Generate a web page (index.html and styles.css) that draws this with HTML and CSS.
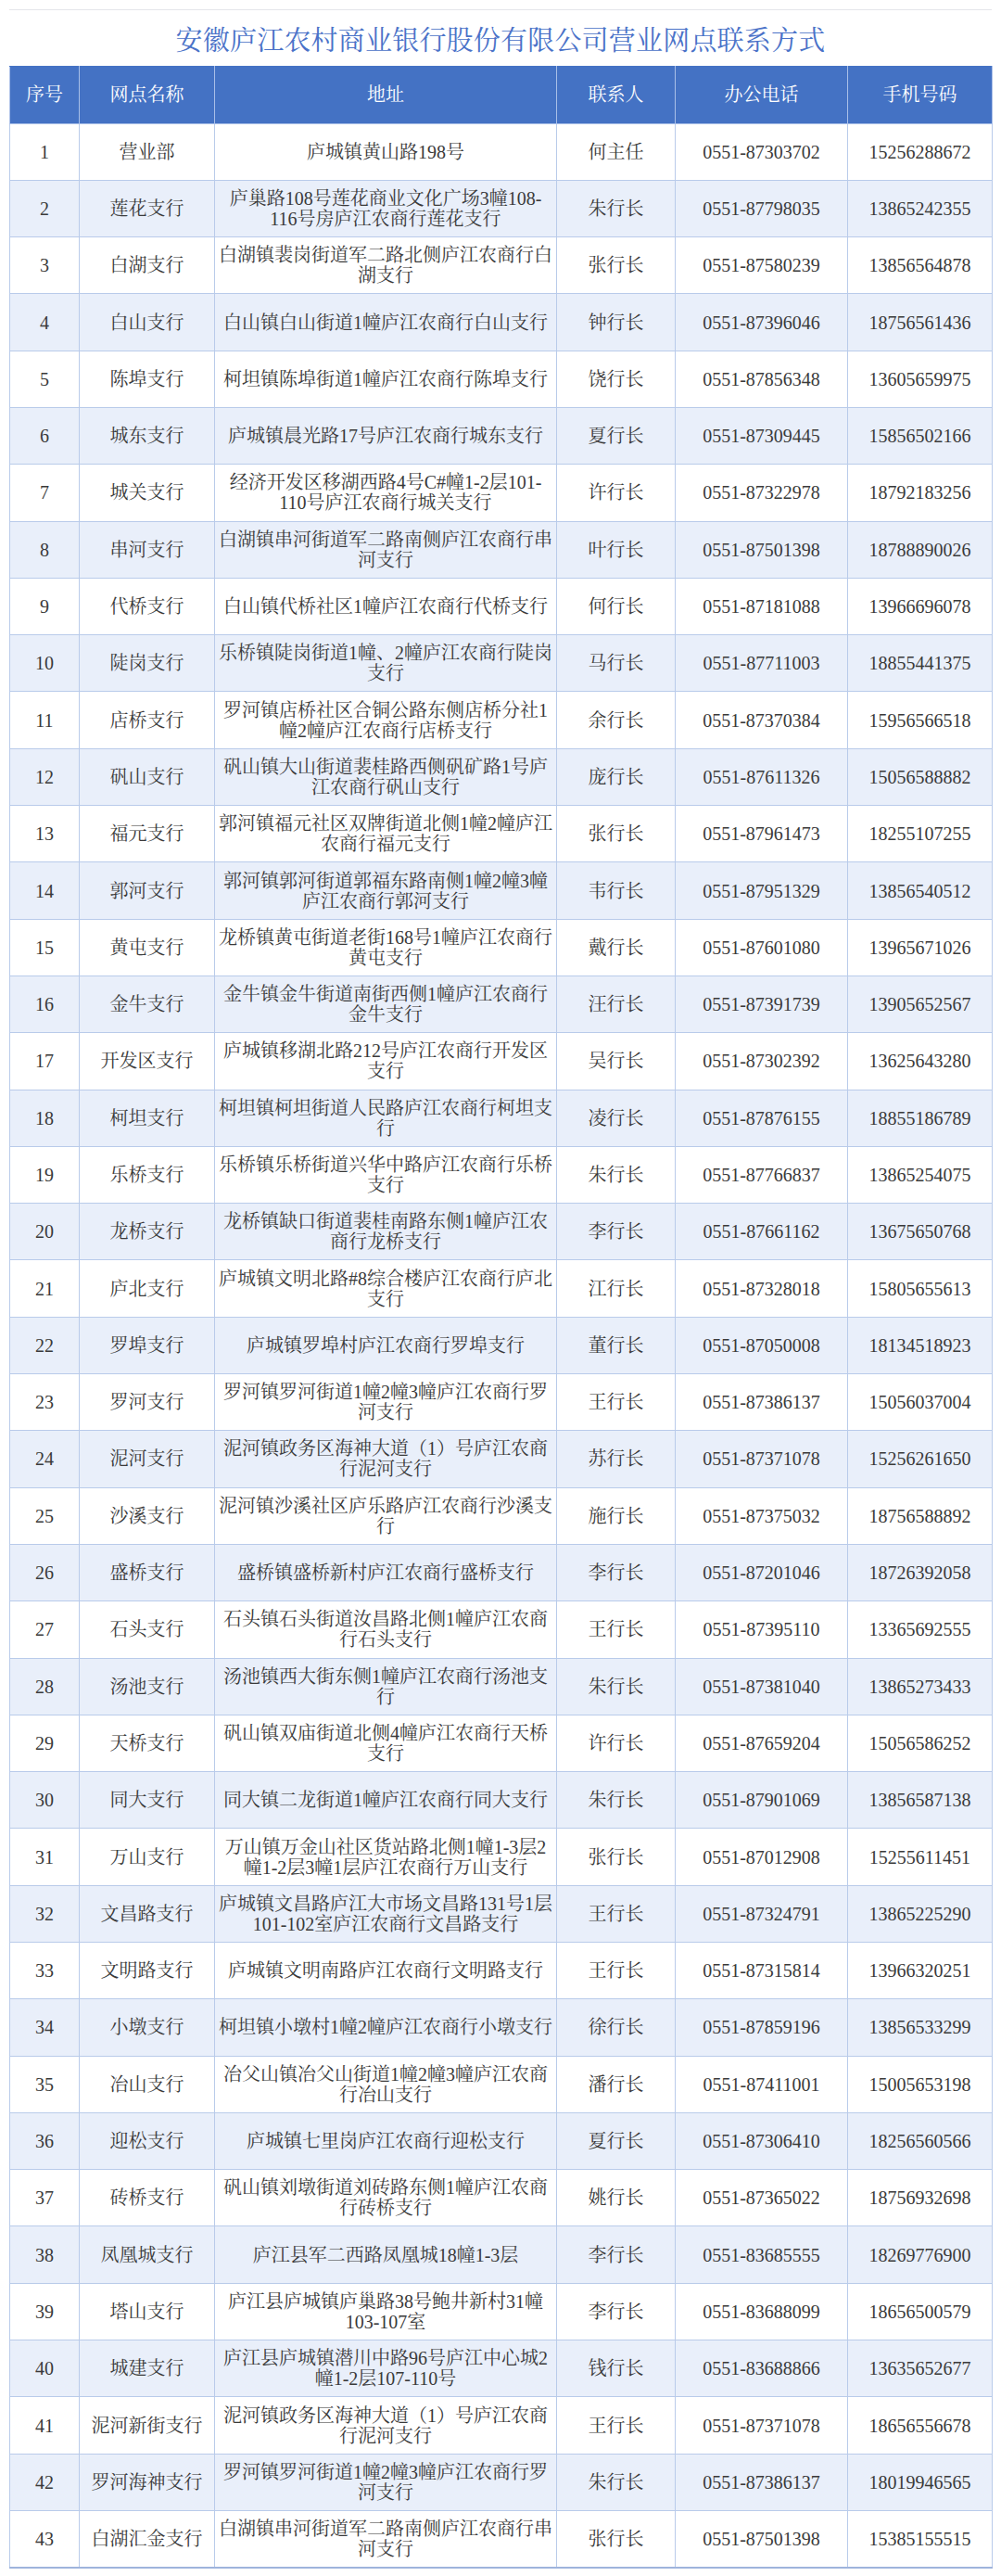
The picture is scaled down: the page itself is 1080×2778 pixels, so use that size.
FILE: index.html
```html
<!DOCTYPE html>
<html lang="zh-CN">
<head>
<meta charset="utf-8">
<title>安徽庐江农村商业银行股份有限公司营业网点联系方式</title>
<link rel="stylesheet" href="styles.css">
</head>
<body>
<div class="page">
  <div class="sheet">
    <h1 class="title">安徽庐江农村商业银行股份有限公司营业网点联系方式</h1>
    <table class="grid">
      <colgroup>
        <col class="c-no"><col class="c-name"><col class="c-addr"><col class="c-person"><col class="c-tel"><col class="c-mob">
      </colgroup>
      <thead>
        <tr><th>序号</th><th>网点名称</th><th>地址</th><th>联系人</th><th>办公电话</th><th>手机号码</th></tr>
      </thead>
      <tbody>
        <tr><td>1</td><td>营业部</td><td class="addr">庐城镇黄山路198号</td><td>何主任</td><td>0551-87303702</td><td>15256288672</td></tr>
        <tr><td>2</td><td>莲花支行</td><td class="addr">庐巢路108号莲花商业文化广场3幢108-116号房庐江农商行莲花支行</td><td>朱行长</td><td>0551-87798035</td><td>13865242355</td></tr>
        <tr><td>3</td><td>白湖支行</td><td class="addr">白湖镇裴岗街道军二路北侧庐江农商行白湖支行</td><td>张行长</td><td>0551-87580239</td><td>13856564878</td></tr>
        <tr><td>4</td><td>白山支行</td><td class="addr">白山镇白山街道1幢庐江农商行白山支行</td><td>钟行长</td><td>0551-87396046</td><td>18756561436</td></tr>
        <tr><td>5</td><td>陈埠支行</td><td class="addr">柯坦镇陈埠街道1幢庐江农商行陈埠支行</td><td>饶行长</td><td>0551-87856348</td><td>13605659975</td></tr>
        <tr><td>6</td><td>城东支行</td><td class="addr">庐城镇晨光路17号庐江农商行城东支行</td><td>夏行长</td><td>0551-87309445</td><td>15856502166</td></tr>
        <tr><td>7</td><td>城关支行</td><td class="addr">经济开发区移湖西路4号C#幢1-2层101-110号庐江农商行城关支行</td><td>许行长</td><td>0551-87322978</td><td>18792183256</td></tr>
        <tr><td>8</td><td>串河支行</td><td class="addr">白湖镇串河街道军二路南侧庐江农商行串河支行</td><td>叶行长</td><td>0551-87501398</td><td>18788890026</td></tr>
        <tr><td>9</td><td>代桥支行</td><td class="addr">白山镇代桥社区1幢庐江农商行代桥支行</td><td>何行长</td><td>0551-87181088</td><td>13966696078</td></tr>
        <tr><td>10</td><td>陡岗支行</td><td class="addr">乐桥镇陡岗街道1幢、2幢庐江农商行陡岗支行</td><td>马行长</td><td>0551-87711003</td><td>18855441375</td></tr>
        <tr><td>11</td><td>店桥支行</td><td class="addr">罗河镇店桥社区合铜公路东侧店桥分社1幢2幢庐江农商行店桥支行</td><td>余行长</td><td>0551-87370384</td><td>15956566518</td></tr>
        <tr><td>12</td><td>矾山支行</td><td class="addr">矾山镇大山街道裴桂路西侧矾矿路1号庐江农商行矾山支行</td><td>庞行长</td><td>0551-87611326</td><td>15056588882</td></tr>
        <tr><td>13</td><td>福元支行</td><td class="addr">郭河镇福元社区双牌街道北侧1幢2幢庐江农商行福元支行</td><td>张行长</td><td>0551-87961473</td><td>18255107255</td></tr>
        <tr><td>14</td><td>郭河支行</td><td class="addr">郭河镇郭河街道郭福东路南侧1幢2幢3幢庐江农商行郭河支行</td><td>韦行长</td><td>0551-87951329</td><td>13856540512</td></tr>
        <tr><td>15</td><td>黄屯支行</td><td class="addr">龙桥镇黄屯街道老街168号1幢庐江农商行黄屯支行</td><td>戴行长</td><td>0551-87601080</td><td>13965671026</td></tr>
        <tr><td>16</td><td>金牛支行</td><td class="addr">金牛镇金牛街道南街西侧1幢庐江农商行金牛支行</td><td>汪行长</td><td>0551-87391739</td><td>13905652567</td></tr>
        <tr><td>17</td><td>开发区支行</td><td class="addr">庐城镇移湖北路212号庐江农商行开发区支行</td><td>吴行长</td><td>0551-87302392</td><td>13625643280</td></tr>
        <tr><td>18</td><td>柯坦支行</td><td class="addr">柯坦镇柯坦街道人民路庐江农商行柯坦支行</td><td>凌行长</td><td>0551-87876155</td><td>18855186789</td></tr>
        <tr><td>19</td><td>乐桥支行</td><td class="addr">乐桥镇乐桥街道兴华中路庐江农商行乐桥支行</td><td>朱行长</td><td>0551-87766837</td><td>13865254075</td></tr>
        <tr><td>20</td><td>龙桥支行</td><td class="addr">龙桥镇缺口街道裴桂南路东侧1幢庐江农商行龙桥支行</td><td>李行长</td><td>0551-87661162</td><td>13675650768</td></tr>
        <tr><td>21</td><td>庐北支行</td><td class="addr">庐城镇文明北路#8综合楼庐江农商行庐北支行</td><td>江行长</td><td>0551-87328018</td><td>15805655613</td></tr>
        <tr><td>22</td><td>罗埠支行</td><td class="addr">庐城镇罗埠村庐江农商行罗埠支行</td><td>董行长</td><td>0551-87050008</td><td>18134518923</td></tr>
        <tr><td>23</td><td>罗河支行</td><td class="addr">罗河镇罗河街道1幢2幢3幢庐江农商行罗河支行</td><td>王行长</td><td>0551-87386137</td><td>15056037004</td></tr>
        <tr><td>24</td><td>泥河支行</td><td class="addr">泥河镇政务区海神大道（1）号庐江农商行泥河支行</td><td>苏行长</td><td>0551-87371078</td><td>15256261650</td></tr>
        <tr><td>25</td><td>沙溪支行</td><td class="addr">泥河镇沙溪社区庐乐路庐江农商行沙溪支行</td><td>施行长</td><td>0551-87375032</td><td>18756588892</td></tr>
        <tr><td>26</td><td>盛桥支行</td><td class="addr">盛桥镇盛桥新村庐江农商行盛桥支行</td><td>李行长</td><td>0551-87201046</td><td>18726392058</td></tr>
        <tr><td>27</td><td>石头支行</td><td class="addr">石头镇石头街道汝昌路北侧1幢庐江农商行石头支行</td><td>王行长</td><td>0551-87395110</td><td>13365692555</td></tr>
        <tr><td>28</td><td>汤池支行</td><td class="addr">汤池镇西大街东侧1幢庐江农商行汤池支行</td><td>朱行长</td><td>0551-87381040</td><td>13865273433</td></tr>
        <tr><td>29</td><td>天桥支行</td><td class="addr">矾山镇双庙街道北侧4幢庐江农商行天桥支行</td><td>许行长</td><td>0551-87659204</td><td>15056586252</td></tr>
        <tr><td>30</td><td>同大支行</td><td class="addr">同大镇二龙街道1幢庐江农商行同大支行</td><td>朱行长</td><td>0551-87901069</td><td>13856587138</td></tr>
        <tr><td>31</td><td>万山支行</td><td class="addr">万山镇万金山社区货站路北侧1幢1-3层2幢1-2层3幢1层庐江农商行万山支行</td><td>张行长</td><td>0551-87012908</td><td>15255611451</td></tr>
        <tr><td>32</td><td>文昌路支行</td><td class="addr">庐城镇文昌路庐江大市场文昌路131号1层101-102室庐江农商行文昌路支行</td><td>王行长</td><td>0551-87324791</td><td>13865225290</td></tr>
        <tr><td>33</td><td>文明路支行</td><td class="addr">庐城镇文明南路庐江农商行文明路支行</td><td>王行长</td><td>0551-87315814</td><td>13966320251</td></tr>
        <tr><td>34</td><td>小墩支行</td><td class="addr">柯坦镇小墩村1幢2幢庐江农商行小墩支行</td><td>徐行长</td><td>0551-87859196</td><td>13856533299</td></tr>
        <tr><td>35</td><td>冶山支行</td><td class="addr">冶父山镇冶父山街道1幢2幢3幢庐江农商行冶山支行</td><td>潘行长</td><td>0551-87411001</td><td>15005653198</td></tr>
        <tr><td>36</td><td>迎松支行</td><td class="addr">庐城镇七里岗庐江农商行迎松支行</td><td>夏行长</td><td>0551-87306410</td><td>18256560566</td></tr>
        <tr><td>37</td><td>砖桥支行</td><td class="addr">矾山镇刘墩街道刘砖路东侧1幢庐江农商行砖桥支行</td><td>姚行长</td><td>0551-87365022</td><td>18756932698</td></tr>
        <tr><td>38</td><td>凤凰城支行</td><td class="addr">庐江县军二西路凤凰城18幢1-3层</td><td>李行长</td><td>0551-83685555</td><td>18269776900</td></tr>
        <tr><td>39</td><td>塔山支行</td><td class="addr">庐江县庐城镇庐巢路38号鲍井新村31幢103-107室</td><td>李行长</td><td>0551-83688099</td><td>18656500579</td></tr>
        <tr><td>40</td><td>城建支行</td><td class="addr">庐江县庐城镇潜川中路96号庐江中心城2幢1-2层107-110号</td><td>钱行长</td><td>0551-83688866</td><td>13635652677</td></tr>
        <tr><td>41</td><td>泥河新街支行</td><td class="addr">泥河镇政务区海神大道（1）号庐江农商行泥河支行</td><td>王行长</td><td>0551-87371078</td><td>18656556678</td></tr>
        <tr><td>42</td><td>罗河海神支行</td><td class="addr">罗河镇罗河街道1幢2幢3幢庐江农商行罗河支行</td><td>朱行长</td><td>0551-87386137</td><td>18019946565</td></tr>
        <tr><td>43</td><td>白湖汇金支行</td><td class="addr">白湖镇串河街道军二路南侧庐江农商行串河支行</td><td>张行长</td><td>0551-87501398</td><td>15385155515</td></tr>
      </tbody>
    </table>
  </div>
</div>
</body>
</html>
```

FILE: styles.css
```css
html, body {
  margin: 0;
  padding: 0;
  background: #ffffff;
}

.page {
  padding: 10px 10px 0 10px;
  font-family: "Liberation Serif", "Noto Serif CJK SC", "Noto Sans CJK SC", serif;
  color: #3a3a3a;
}

.sheet {
  width: 1060px;
  border-top: 1px solid #e4e6ea;
}

.title {
  margin: 0;
  height: 60px;
  display: flex;
  align-items: center;
  justify-content: center;
  font-size: 29px;
  font-weight: normal;
  color: #4a72c8;
  letter-spacing: 0.2px;
}

.grid {
  width: 1060px;
  border-collapse: collapse;
  table-layout: fixed;
  font-size: 20px;
  line-height: 22px;
}

.c-no { width: 75px; }
.c-name { width: 146px; }
.c-addr { width: 369px; }
.c-person { width: 128px; }
.c-tel { width: 186px; }
.c-mob { width: 156px; }

.grid th,
.grid td {
  text-align: center;
  vertical-align: middle;
  padding: 0 2px;
  border: 1px solid #b9cbea;
}

.grid thead tr {
  height: 61.5px;
}

.grid th {
  background: #4472c4;
  color: #ffffff;
  font-weight: normal;
  border-color: #a9bfe8;
  border-top-color: #4472c4;
}

.grid tbody tr {
  height: 61.3px;
}

.grid tbody tr:nth-child(even) td {
  background: #e9effa;
}

.grid tbody tr:last-child td {
  border-bottom: 2px solid #9fb4dc;
}
```
